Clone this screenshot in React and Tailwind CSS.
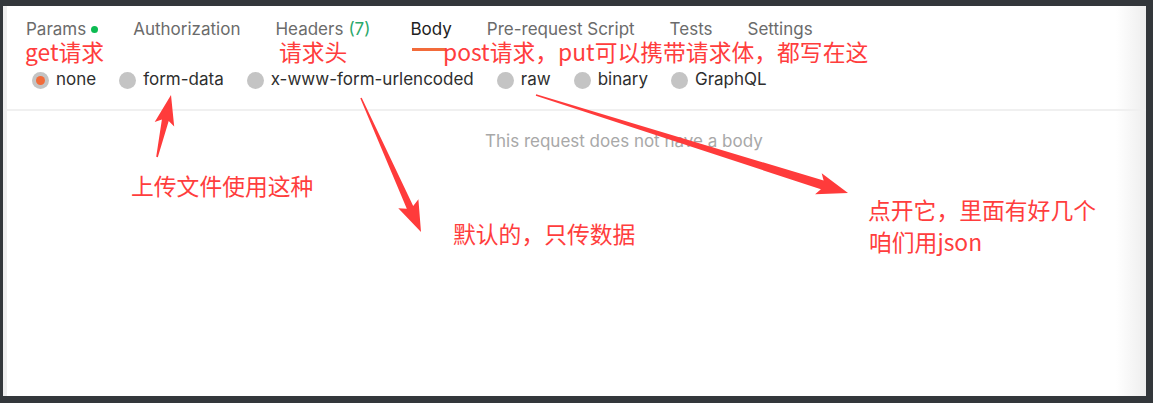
import React from "react";

function arrowPoints(t, p, L, W, w, tw) {
  const dx = p[0] - t[0];
  const dy = p[1] - t[1];
  const len = Math.hypot(dx, dy);
  const ux = dx / len;
  const uy = dy / len;
  const nx = -uy;
  const ny = ux;
  const bx = p[0] - ux * L;
  const by = p[1] - uy * L;
  const bbx = p[0] - ux * (L * 1.15);
  const bby = p[1] - uy * (L * 1.15);
  const pts = [
    [t[0] + nx * tw, t[1] + ny * tw],
    [bx + nx * w, by + ny * w],
    [bbx + nx * W, bby + ny * W],
    [p[0], p[1]],
    [bbx - nx * W, bby - ny * W],
    [bx - nx * w, by - ny * w],
    [t[0] - nx * tw, t[1] - ny * tw],
  ];
  return pts.map((q) => q[0].toFixed(1) + "," + q[1].toFixed(1)).join(" ");
}

const tabs = [
  { label: "Params", dot: true },
  { label: "Authorization" },
  { label: "Headers", count: "(7)" },
  { label: "Body", active: true },
  { label: "Pre-request Script" },
  { label: "Tests" },
  { label: "Settings" },
];

const radios = ["none", "form-data", "x-www-form-urlencoded", "raw", "binary", "GraphQL"];

export default function App() {
  return (
    <div className="w-[1153px] h-[403px] bg-[#33373b] pt-[6px] pl-[3px] pr-[7px] pb-[7px] overflow-hidden">
      <div
        className="relative w-full h-full bg-white border-l-[4px] border-[#eeeeee] overflow-hidden"
        style={{ fontFamily: "Inter, 'Noto Sans', sans-serif" }}
      >
        <div className="absolute right-0 top-0 bottom-0 w-[30px] bg-gradient-to-r from-white to-[#eeeeee]" />
        {/* tabs */}
        <div className="relative flex items-center gap-[35px] pl-[19px] pt-[2px] h-[45px] text-[17px] text-[#6b6b6b]">
          {tabs.map((t) => (
            <div
              key={t.label}
              className={"flex items-center " + (t.active ? "text-[#212121]" : "") + (t.count ? " pr-[5px]" : "")}
            >
              <span>{t.label}</span>
              {t.count && <span className="ml-[5px] text-[#2aa86b]">{t.count}</span>}
              {t.dot && <span className="ml-[5px] w-[7px] h-[7px] rounded-full bg-[#0cbb52]" />}
            </div>
          ))}
        </div>
        {/* radios */}
        <div className="relative flex items-center gap-[23px] pl-[25px] h-[30px] mt-[14px] text-[17px] text-[#2e2e2e]">
          {radios.map((r, i) => (
            <div key={r} className="flex items-center gap-[7px]">
              {i === 0 ? (
                <span className="w-[17px] h-[17px] rounded-full bg-[#c4c4c4] flex items-center justify-center">
                  <span className="w-[9px] h-[9px] rounded-full bg-[#f26b3a]" />
                </span>
              ) : (
                <span className="w-[17px] h-[17px] rounded-full bg-[#c4c4c4]" />
              )}
              <span>{r}</span>
            </div>
          ))}
        </div>
        <div className="relative mt-[14px] h-[2px] bg-[#f0f0f0]" />
        <div className="relative pl-[478px] pt-[18px] text-[17px] leading-[24px] text-[#a8a8a8]">This request does not have a body</div>

        {/* annotation overlay */}
        <div className="absolute left-[405px] top-[42px] w-[34px] h-[3px] bg-[#f26b3a]" />
        <svg className="absolute left-[-7px] top-[-6px]" width="1153" height="403" viewBox="0 0 1153 403">
          <polygon points={arrowPoints([157, 157], [171, 95], 26, 10, 3.5, 0.8)} fill="#ff3b3b" />
          <polygon points={arrowPoints([361, 98], [421, 232], 27, 11, 3.5, 0.8)} fill="#ff3b3b" />
          <polygon points={arrowPoints([536, 95], [848, 193], 27, 11, 4.5, 0.8)} fill="#ff3b3b" />
        </svg>
        <div
          className="absolute inset-0 text-[22.8px] leading-none text-[#ff3d3d]"
          style={{ fontFamily: "'Noto Sans CJK SC', 'Noto Sans', sans-serif" }}
        >
          <div className="absolute left-[18px] top-[35px] whitespace-nowrap">get请求</div>
          <div className="absolute left-[272px] top-[35px] whitespace-nowrap">请求头</div>
          <div className="absolute left-[436px] top-[35px] whitespace-nowrap">post请求，put可以携带请求体，都写在这</div>
          <div className="absolute left-[124px] top-[169px] whitespace-nowrap">上传文件使用这种</div>
          <div className="absolute left-[446px] top-[217px] whitespace-nowrap">默认的，只传数据</div>
          <div className="absolute left-[861px] top-[193px] whitespace-nowrap">点开它，里面有好几个</div>
          <div className="absolute left-[862px] top-[225px] whitespace-nowrap">咱们用json</div>
        </div>
      </div>
    </div>
  );
}
